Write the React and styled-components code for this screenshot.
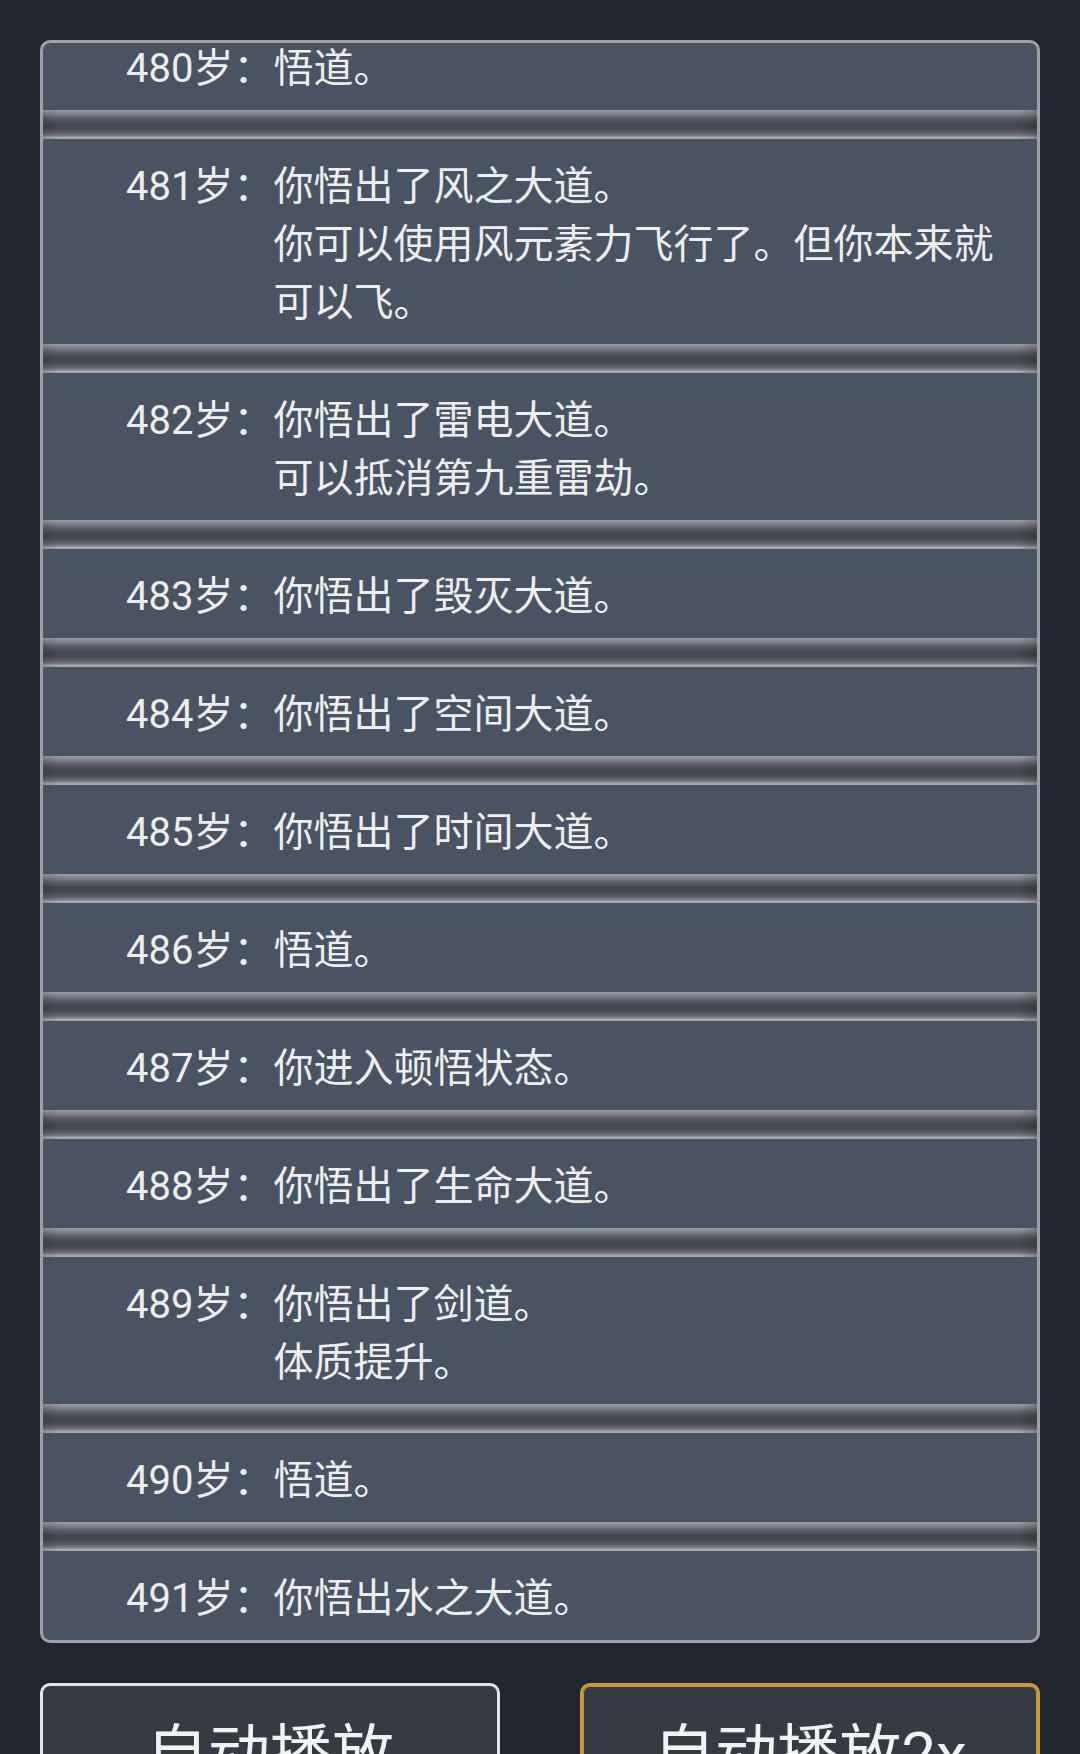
import React from "react";
import styled, { createGlobalStyle } from "styled-components";

const GlobalStyle = createGlobalStyle`
  html, body {
    margin: 0;
    padding: 0;
    overflow: hidden;
    background: #21262e;
  }
  * { box-sizing: border-box; }
`;

const FONT = `"Roboto", "Noto Sans CJK SC", "Noto Sans", sans-serif`;

const Page = styled.div`
  min-height: 100vh;
  background: #21262e;
  padding: 40px 40px 0 40px;
  font-family: ${FONT};
  color: #eceef0;
`;

const LogPanel = styled.div`
  height: 1603px;
  border: 3px solid #9ea1a6;
  border-radius: 10px;
  background: #4a5361;
  overflow: hidden;
`;

const LogList = styled.div`
  display: flex;
  flex-direction: column;
  margin-top: ${(p) => -p.$scroll}px;
`;

const Entry = styled.div`
  display: flex;
  align-items: flex-start;
  padding: 19px 28px 12px 83px;
  font-size: 40px;
  line-height: 58px;
  color: #eceef0;
`;

const Age = styled.span`
  white-space: nowrap;
  flex: none;
`;

const Content = styled.div`
  flex: 1;
  min-width: 0;
`;

const Separator = styled.div`
  height: 29px;
  flex: none;
  background:
    linear-gradient(to right, rgba(0,0,0,0.12) 0px, rgba(0,0,0,0) 16px, rgba(0,0,0,0) calc(100% - 18px), rgba(0,0,0,0.18) 100%),
    linear-gradient(
      to bottom,
      #9a9da2 0px,
      #868990 3px,
      #5e6168 8px,
      #46494f 13px,
      #45484f 18px,
      #5f626a 23px,
      #7f8288 26px,
      #a3a6aa 27px,
      #a3a6aa 29px
    );
`;

const ButtonRow = styled.div`
  display: grid;
  grid-template-columns: 1fr 1fr;
  column-gap: 80px;
  margin-top: 40px;
`;

const PlayButton = styled.button`
  height: 150px;
  border: 3px solid ${(p) => (p.$active ? "#d09a2c" : "#e4e5e8")};
  border-radius: 10px;
  background: #363a43;
  box-shadow: ${(p) => (p.$active ? "inset 0 0 0 1px rgba(255, 226, 160, 0.55)" : "none")};
  color: #f1f2f4;
  font-family: ${FONT};
  font-size: 62px;
  line-height: 1.2;
  padding: 32px 0 0 0;
  display: flex;
  justify-content: center;
  align-items: flex-start;
  cursor: pointer;
`;

const entries = [
  { age: 480, lines: ["悟道。"] },
  { age: 481, lines: ["你悟出了风之大道。", "你可以使用风元素力飞行了。但你本来就可以飞。"] },
  { age: 482, lines: ["你悟出了雷电大道。", "可以抵消第九重雷劫。"] },
  { age: 483, lines: ["你悟出了毁灭大道。"] },
  { age: 484, lines: ["你悟出了空间大道。"] },
  { age: 485, lines: ["你悟出了时间大道。"] },
  { age: 486, lines: ["悟道。"] },
  { age: 487, lines: ["你进入顿悟状态。"] },
  { age: 488, lines: ["你悟出了生命大道。"] },
  { age: 489, lines: ["你悟出了剑道。", "体质提升。"] },
  { age: 490, lines: ["悟道。"] },
  { age: 491, lines: ["你悟出水之大道。"] },
];

export default function App() {
  return (
    <>
      <GlobalStyle />
      <Page>
        <LogPanel>
          <LogList $scroll={22}>
            {entries.map((e, i) => (
              <React.Fragment key={e.age}>
                {i > 0 && <Separator />}
                <Entry>
                  <Age>{e.age}岁：</Age>
                  <Content>
                    {e.lines.map((l, j) => (
                      <div key={j}>{l}</div>
                    ))}
                  </Content>
                </Entry>
              </React.Fragment>
            ))}
          </LogList>
        </LogPanel>
        <ButtonRow>
          <PlayButton>自动播放</PlayButton>
          <PlayButton $active>自动播放2x</PlayButton>
        </ButtonRow>
      </Page>
    </>
  );
}
